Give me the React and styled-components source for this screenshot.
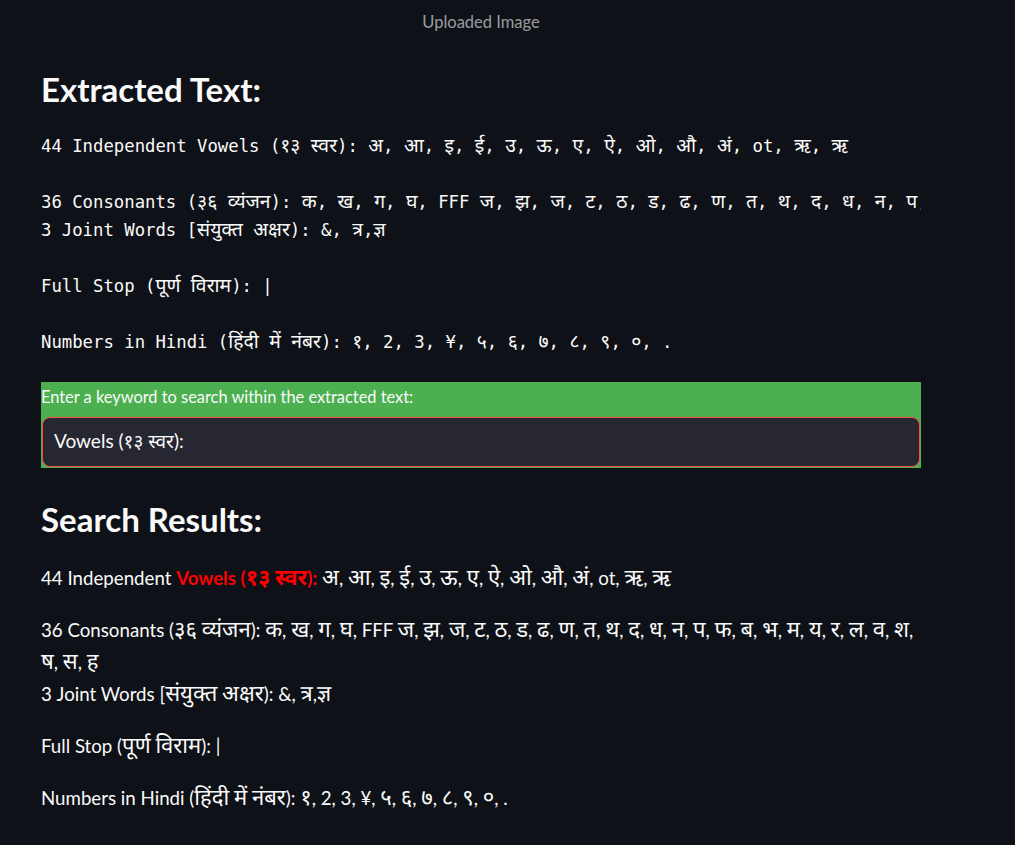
import React from "react";
import styled, { createGlobalStyle } from "styled-components";

const GlobalStyle = createGlobalStyle`
  html, body {
    margin: 0;
    background: #0e1117;
    color: #fafafa;
  }
`;

const SANS = `"Lato", "Noto Sans Devanagari", "Lohit Devanagari", "FreeSans", "Noto Sans", sans-serif`;
const MONO = `"DejaVu Sans Mono", "Noto Sans Devanagari", "Lohit Devanagari", "FreeMono", monospace`;

const Page = styled.main`
  width: 880px;
  padding: 12px 0 20px 41px;
  font-family: ${SANS};
`;

const Caption = styled.div`
  text-align: center;
  font-size: 16.5px;
  line-height: 20px;
  color: rgba(250, 250, 250, 0.6);
`;

const Heading = styled.h2`
  margin: ${(p) => p.$top}px 0 0;
  font-size: 33px;
  line-height: 46px;
  font-weight: 700;
  color: #fafafa;
`;

const Pre = styled.pre`
  margin: 20px 0 0;
  font-family: ${MONO};
  font-size: 17.3px;
  line-height: 28px;
  white-space: pre;
  overflow: hidden;
  color: #fafafa;
`;

// devanagari runs come out smaller than in the reference, bump them up
const Deva = styled.span`
  font-size: ${(p) => p.$scale}em;
  line-height: 1px;
`;

const SearchBox = styled.section`
  margin-top: 26px;
  background: #4caf50;
  display: flex;
  flex-direction: column;
`;

const Label = styled.label`
  font-size: 16.4px;
  line-height: 20px;
  padding: 5px 0 10px;
  color: #fafafa;
`;

const Input = styled.input`
  box-sizing: border-box;
  height: 50px;
  margin: 0 1px 1px;
  padding: 0 11px;
  background: #262730;
  border: 1px solid #ff4b4b;
  border-radius: 8px;
  color: #fafafa;
  font-family: ${SANS};
  font-size: 19px;
  outline: none;
`;

const Results = styled.div`
  margin-top: 20px;
`;

const Para = styled.p`
  margin: 0 0 20px;
  font-size: 18.7px;
  line-height: 32px;
`;

const Hit = styled.span`
  color: #ff0000;
  font-weight: 700;
`;

const DEV = /([\u0900-\u097F]+)/;

const Dv = ({ text, scale = 1.18 }) =>
  text.split(DEV).map((part, i) =>
    i % 2 ? (
      <Deva key={i} $scale={scale}>
        {part}
      </Deva>
    ) : (
      part
    )
  );

const vowels = "अ, आ, इ, ई, उ, ऊ, ए, ऐ, ओ, औ, अं, ot, ऋ, ऋ";
const consonants =
  "36 Consonants (३६ व्यंजन): क, ख, ग, घ, FFF ज, झ, ज, ट, ठ, ड, ढ, ण, त, थ, द, ध, न, प, फ, ब, भ, म, य, र, ल, व, श, ष, स, ह";
const joint = "3 Joint Words [संयुक्त अक्षर): &, त्र,ज्ञ";
const stop = "Full Stop (पूर्ण विराम): |";
const numbers = "Numbers in Hindi (हिंदी में नंबर): १, 2, 3, ¥, ५, ६, ७, ८, ९, ०, .";

const extracted = [
  `44 Independent Vowels (१३ स्वर): ${vowels}`,
  "",
  consonants,
  joint,
  "",
  stop,
  "",
  numbers,
].join("\n");

export default function App() {
  return (
    <>
      <GlobalStyle />
      <Page>
        <Caption>Uploaded Image</Caption>
        <Heading $top={34}>Extracted Text:</Heading>
        <Pre>
          <Dv text={extracted} scale={1.12} />
        </Pre>
        <SearchBox>
          <Label htmlFor="kw">Enter a keyword to search within the extracted text:</Label>
          <Input id="kw" defaultValue="Vowels (१३ स्वर):" />
        </SearchBox>
        <Heading $top={28}>Search Results:</Heading>
        <Results>
          <Para>
            44 Independent{" "}
            <Hit>
              <Dv text="Vowels (१३ स्वर):" />
            </Hit>{" "}
            <Dv text={vowels} />
          </Para>
          <Para>
            <Dv text={consonants} />
            <br />
            <Dv text={joint} />
          </Para>
          <Para>
            <Dv text={stop} />
          </Para>
          <Para>
            <Dv text={numbers} />
          </Para>
        </Results>
      </Page>
    </>
  );
}
